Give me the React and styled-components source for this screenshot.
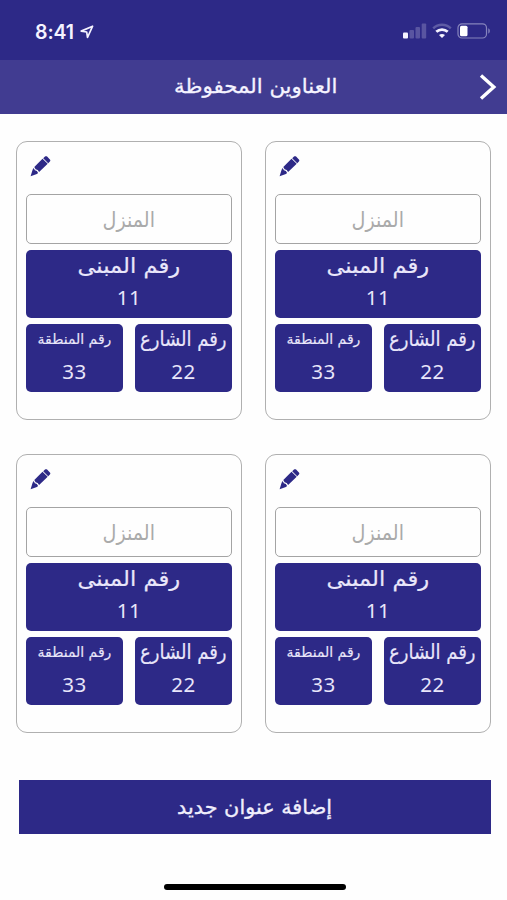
import React from 'react'
import styled, { createGlobalStyle } from 'styled-components'

const NAVY = '#2d2987'

const GlobalStyle = createGlobalStyle`
  *, *::before, *::after {
    box-sizing: border-box;
  }

  body {
    margin: 0;
    background: #fefefe;
    font-family: 'DejaVu Sans', sans-serif;
  }
`

const Screen = styled.div`
  display: flex;
  flex-direction: column;
  width: 507px;
  height: 900px;
  overflow: hidden;
`

const StatusBar = styled.div`
  display: flex;
  align-items: center;
  justify-content: space-between;
  height: 60px;
  padding: 3px 16px 0 35px;
  background: ${NAVY};
  color: #f5f3ff;
`

const Clock = styled.div`
  display: flex;
  align-items: center;
  gap: 6px;
  font: 600 19.5px/24px Inter, sans-serif;
  letter-spacing: -0.1px;
`

const StatusIcons = styled.div`
  display: flex;
  align-items: center;
  gap: 5px;
  padding-bottom: 1px;
`

const Header = styled.header`
  display: grid;
  grid-template-columns: 42px 1fr 38px;
  align-items: center;
  height: 54px;
  background: #413c91;
  color: #f5f3ff;
`

const Title = styled.h1`
  display: flex;
  grid-column: 2;
  justify-content: center;
  margin: 0;
  padding-bottom: 2px;
`

const BackButton = styled.button`
  display: flex;
  justify-content: center;
  padding: 0;
  border: 0;
  background: none;
  color: #fff;
`

const Cards = styled.main`
  display: grid;
  grid-template-columns: 226px 226px;
  grid-auto-rows: 279px;
  gap: 34px 23px;
  padding: 27px 16px 0;
`

const Card = styled.section`
  display: flex;
  flex-direction: column;
  gap: 6px;
  padding: 0 9px;
  border: 1.5px solid #b0b0b0;
  border-radius: 11px;
`

const EditButton = styled.button`
  display: flex;
  height: 46px;
  padding: 14px 0 0 4px;
  border: 0;
  background: none;
  color: ${NAVY};
`

const NameField = styled.div`
  display: flex;
  align-items: center;
  justify-content: center;
  height: 50px;
  padding-top: 3px;
  border: 1.5px solid #a4a4a4;
  border-radius: 5px;
  color: #aaa;
`

const TileRow = styled.div`
  display: grid;
  grid-template-columns: repeat(2, minmax(0, 1fr));
  gap: 12px;
`

const Tile = styled.div`
  display: flex;
  flex-direction: column;
  align-items: center;
  height: 68px;
  border-radius: 5px;
  background: ${NAVY};
  color: #e9e6fa;
`

const TileLabel = styled.div`
  display: flex;
  align-items: center;
  justify-content: center;
  height: 31px;
`

const TileValue = styled.div`
  font: 400 20.5px/32px 'Noto Sans', sans-serif;
  letter-spacing: 0.4px;
`

const ArabicText = styled.span`
  display: inline-block;
  font-size: ${({ $size }) => $size}px;
  font-weight: 400;
  line-height: 1.2;
  white-space: nowrap;
  transform: scaleX(${({ $stretch }) => $stretch || 1});
  -webkit-text-stroke: ${({ $stroke }) => $stroke || 0}px currentColor;
`

const AddButton = styled.button`
  width: 472px;
  height: 54px;
  margin: 47px 0 0 19px;
  padding: 0;
  border: 0;
  background: ${NAVY};
  color: #f0eefc;
  font-family: inherit;
`

const HomeIndicator = styled.div`
  width: 182px;
  height: 6px;
  margin: 50px auto 0 164px;
  border-radius: 3px;
  background: #000;
`

const addresses = [1, 2, 3, 4].map(id => ({
  id,
  name: 'المنزل',
  building: '11',
  street: '22',
  zone: '33'
}))

function LocationIcon () {
  return (
    <svg width="14" height="14" viewBox="0 0 14 14" fill="none">
      <path d="M12.6 1.2 1.2 6.1l5.5.9.8 5.5z" stroke="currentColor" strokeWidth="1.7" strokeLinejoin="round" />
    </svg>
  )
}

function SignalIcon () {
  return (
    <svg width="24" height="16" viewBox="0 0 24 16" fill="currentColor">
      <rect x="0" y="9.5" width="5" height="6" rx="1" />
      <g opacity=".22">
        <rect x="6.5" y="7" width="4.5" height="8.5" rx="1" />
        <rect x="12.5" y="4" width="4.5" height="11.5" rx="1" />
        <rect x="18.7" y="0.5" width="4.5" height="15" rx="1" />
      </g>
    </svg>
  )
}

function WifiIcon () {
  return (
    <svg width="20" height="16" viewBox="0 0 20 16" fill="none" stroke="currentColor" strokeWidth="2.5">
      <path d="M1.2 5.3C6.2.6 13.8.6 18.8 5.3" opacity=".25" />
      <path d="M4.3 8.8c3.3-3 8.1-3 11.400 0" strokeWidth="2.8" />
      <path d="M7 12c1.800-1.500 4.200-1.500 6 0l-3 3.100z" fill="currentColor" stroke="none" />
    </svg>
  )
}

function BatteryIcon () {
  return (
    <svg width="34" height="16" viewBox="0 0 34 16" fill="none">
      <rect x="1" y=".8" width="28.5" height="14.2" rx="4" stroke="currentColor" strokeWidth="1.2" opacity=".45" />
      <path d="M31.3 5.2v5.4c2-.7 2-4.7 0-5.4z" fill="currentColor" opacity=".45" />
      <rect x="3" y="2.8" width="7.5" height="10.4" rx="1.5" fill="#fff" />
    </svg>
  )
}

function PencilIcon () {
  return (
    <svg width="21" height="21" viewBox="0 0 21 21" fill="currentColor">
      <path d="M13.2 2.2 15 .6c.7-.6 1.5-.6 2.1 0l2.8 2.8c.6.6.6 1.4 0 2.1l-1.7 1.7z" />
      <path d="m12.5 2.8 5.2 5-8.6 8.3-1.400-2.100-2.100-.7-1.300-2.400z" />
      <path d="m3.6 12 1.3 2.3 2 .8 1.200 2-1.200.8L.6 20.200l2-6.500z" />
    </svg>
  )
}

function AddressCard ({ name, building, street, zone }) {
  return (
    <Card>
      <EditButton aria-label="تعديل"><PencilIcon /></EditButton>
      <NameField><ArabicText $size={21} $stretch={0.91}>{name}</ArabicText></NameField>
      <Tile>
        <TileLabel><ArabicText $size={21.5} $stretch={1.05} $stroke={0.2}>رقم المبنى</ArabicText></TileLabel>
        <TileValue>{building}</TileValue>
      </Tile>
      <TileRow>
        <Tile>
          <TileLabel><ArabicText $size={14} $stroke={0.15}>رقم المنطقة</ArabicText></TileLabel>
          <TileValue>{zone}</TileValue>
        </Tile>
        <Tile>
          <TileLabel><ArabicText $size={20.5} $stretch={0.88} $stroke={0.2}>رقم الشارع</ArabicText></TileLabel>
          <TileValue>{street}</TileValue>
        </Tile>
      </TileRow>
    </Card>
  )
}

function App () {
  return (
    <Screen>
      <GlobalStyle />
      <StatusBar>
        <Clock>8:41<LocationIcon /></Clock>
        <StatusIcons>
          <SignalIcon />
          <WifiIcon />
          <BatteryIcon />
        </StatusIcons>
      </StatusBar>
      <Header>
        <Title><ArabicText $size={20} $stretch={1.065} $stroke={0.3}>العناوين المحفوظة</ArabicText></Title>
        <BackButton aria-label="رجوع">
          <svg width="18" height="26" viewBox="0 0 18 26" fill="none" stroke="currentColor" strokeWidth="3.4">
            <path d="M2 1.5 14.8 13 2 24.5" />
          </svg>
        </BackButton>
      </Header>
      <Cards>
        {addresses.map(address => <AddressCard key={address.id} {...address} />)}
      </Cards>
      <AddButton><ArabicText $size={20} $stretch={1.04} $stroke={0.35}>إضافة عنوان جديد</ArabicText></AddButton>
      <HomeIndicator />
    </Screen>
  )
}

export default App
